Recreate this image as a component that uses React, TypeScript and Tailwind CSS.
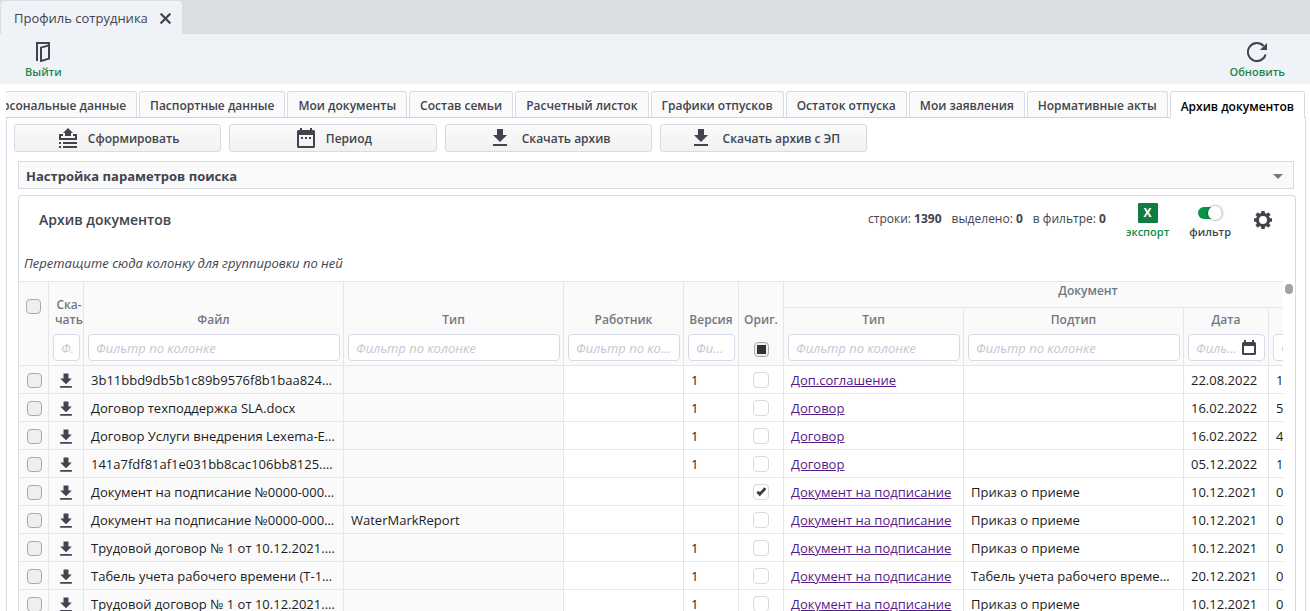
import { useState } from "react";
import type { ReactNode } from "react";

const tabs = [
  "Персональные данные",
  "Паспортные данные",
  "Мои документы",
  "Состав семьи",
  "Расчетный листок",
  "Графики отпусков",
  "Остаток отпуска",
  "Мои заявления",
  "Нормативные акты",
  "Архив документов",
];

type Row = {
  file: string;
  type: string;
  version: string;
  original: boolean;
  docType: string;
  subtype: string;
  date: string;
  number: string;
};

const sign = "Документ на подписание";
const order = "Приказ о приеме";

const rows: Row[] = [
  { file: "3b11bbd9db5b1c89b9576f8b1baa824…", type: "", version: "1", original: false, docType: "Доп.соглашение", subtype: "", date: "22.08.2022", number: "1" },
  { file: "Договор техподдержка SLA.docx", type: "", version: "1", original: false, docType: "Договор", subtype: "", date: "16.02.2022", number: "5" },
  { file: "Договор Услуги внедрения Lexema-E…", type: "", version: "1", original: false, docType: "Договор", subtype: "", date: "16.02.2022", number: "4" },
  { file: "141a7fdf81af1e031bb8cac106bb8125.…", type: "", version: "1", original: false, docType: "Договор", subtype: "", date: "05.12.2022", number: "1" },
  { file: "Документ на подписание №0000-000…", type: "", version: "", original: true, docType: sign, subtype: order, date: "10.12.2021", number: "0" },
  { file: "Документ на подписание №0000-000…", type: "WaterMarkReport", version: "", original: false, docType: sign, subtype: order, date: "10.12.2021", number: "0" },
  { file: "Трудовой договор № 1 от 10.12.2021.…", type: "", version: "1", original: false, docType: sign, subtype: order, date: "10.12.2021", number: "0" },
  { file: "Табель учета рабочего времени (Т-1…", type: "", version: "1", original: false, docType: sign, subtype: "Табель учета рабочего време…", date: "20.12.2021", number: "0" },
  { file: "Трудовой договор № 1 от 10.12.2021.…", type: "", version: "1", original: false, docType: sign, subtype: order, date: "10.12.2021", number: "0" },
];

function DownloadIcon({ className }: { className: string }) {
  return (
    <svg viewBox="0 0 24 24" fill="currentColor" className={className} aria-hidden="true">
      <path d="M19 9h-4V3H9v6H5l7 7 7-7zM5 18v2h14v-2H5z" />
    </svg>
  );
}

function ExitIcon() {
  return (
    <svg width="20" height="20" viewBox="0 0 20 20" fill="none" stroke="currentColor" strokeWidth="2" aria-hidden="true">
      <path d="M4 19V1h12v3" />
      <path d="M8 5.6L16 3.4V16.6L8 19z" />
    </svg>
  );
}

function RefreshIcon() {
  return (
    <svg width="20" height="20" viewBox="0 0 20 20" aria-hidden="true">
      <path d="M18.6 12.4A9 9 0 1 1 16.6 4" fill="none" stroke="currentColor" strokeWidth="2" />
      <path d="M20 1v7h-7z" fill="currentColor" />
    </svg>
  );
}

function GenerateIcon() {
  return (
    <svg width="20" height="20" viewBox="0 0 20 20" fill="currentColor" aria-hidden="true">
      <path d="M10 0l5 5h-2v3H7V5H5z" />
      <path d="M1 6h4v2H3v2h14V8h-2V6h4v6H1z" />
      <path d="M1 14h2v2H1zM5 14h14v2H5zM1 18h2v2H1zM5 18h14v2H5z" />
    </svg>
  );
}

function PeriodIcon() {
  return (
    <svg width="20" height="20" viewBox="0 0 20 20" fill="currentColor" aria-hidden="true">
      <path fillRule="evenodd" d="M4 0h2v2h8V0h2v2h1.500a1.500 1.500 0 0 1 1.500 1.500v15a1.500 1.500 0 0 1-1.500 1.500h-15A1.500 1.500 0 0 1 1 18.500v-15A1.500 1.500 0 0 1 2.500 2H4zM3 7v11h14V7z" />
      <path d="M5 9h2v2H5zM9 9h2v2H9zM13 9h2v2h-2z" />
    </svg>
  );
}

function DateIcon() {
  return (
    <svg width="14" height="16" viewBox="0 0 14 16" fill="currentColor" aria-hidden="true" className="shrink-0">
      <path fillRule="evenodd" d="M2 0h2v2h6V0h2v2h.5A1.500 1.500 0 0 1 14 3.500v10a1.500 1.500 0 0 1-1.500 1.500h-11A1.500 1.500 0 0 1 0 13.500v-10A1.500 1.500 0 0 1 1.500 2H2zM2 6v7h10V6z" />
    </svg>
  );
}

function GearIcon() {
  return (
    <svg width="18" height="18" viewBox="0 0 18 18" fill="none" stroke="currentColor" aria-hidden="true">
      <circle cx="9" cy="9" r="5.600" strokeWidth="3.200" />
      <path strokeWidth="3.600" d="M9 0v3M9 15v3M0 9h3M15 9h3" />
      <path strokeWidth="3.600" d="M2.600 2.600l2 2M13.400 13.400l2 2M15.400 2.600l-2 2M4.600 13.400l-2 2" />
    </svg>
  );
}

function ActionButton({ icon, children }: { icon: ReactNode; children: ReactNode }) {
  return (
    <button
      type="button"
      className="flex h-7 items-center justify-center gap-2.5 rounded-[3px] border border-[#d9dae8] bg-linear-to-b from-[#fafafa] to-[#f1f1f1] pl-0.5 text-[12px] font-semibold"
    >
      {icon}
      <span className="pt-0.5">{children}</span>
    </button>
  );
}

function SelectBox({ label, mixed = false }: { label: string; mixed?: boolean }) {
  return (
    <label className="inline-grid place-items-center align-middle *:[grid-area:1/1]">
      <input
        type="checkbox"
        aria-label={label}
        className="size-[15px] appearance-none rounded-[4px] border border-[#a9a9a9] bg-[#efefef]"
      />
      {mixed && <span className="size-[9px] bg-[#333333]" />}
    </label>
  );
}

function OriginalBox({ checked }: { checked: boolean }) {
  return (
    <label className="inline-grid place-items-center align-middle *:[grid-area:1/1]">
      <input
        type="checkbox"
        aria-label="Оригинал"
        defaultChecked={checked}
        className="peer size-4 appearance-none rounded-[4px] border border-[#d5dae0] bg-white"
      />
      <svg width="10" height="10" viewBox="0 0 10 10" fill="none" stroke="#3a3a3a" strokeWidth="2.8" aria-hidden="true" className="invisible peer-checked:visible">
        <path d="M1.400 4.800l2.400 2.400L9.400 1.200" />
      </svg>
    </label>
  );
}

function Filter({ label, withDate = false, narrow = false }: { label: string; withDate?: boolean; narrow?: boolean }) {
  return (
    <span
      className={
        narrow
          ? "mr-[3px] ml-1 flex h-[27px] items-center rounded-[4px] border border-[#d9dae8] bg-white pr-1.5 pl-[7px]"
          : "mr-[3px] ml-1 flex h-[27px] items-center rounded-[4px] border border-[#d9dae8] bg-white pr-2 pl-[7px]"
      }
    >
      <input
        type="text"
        aria-label={label}
        placeholder={narrow ? "Ф." : "Фильтр по колонке"}
        className="w-full min-w-0 pt-0.5 text-[13px] font-normal text-ellipsis italic outline-none placeholder:text-[#c3c7d3]"
      />
      {withDate && (
        <button type="button" aria-label="Выбрать дату" className="ml-1 text-[#41444f]">
          <DateIcon />
        </button>
      )}
    </span>
  );
}

const headCell = "border-r border-b border-[#e6e6ea] bg-[#fafafa] p-0 pb-1 align-bottom font-semibold";
const bodyCell = "h-7 overflow-hidden border-r border-b border-[#e6e6ea] p-0 pt-0.5 pl-[7px] whitespace-nowrap";

function HeadLabel({ children }: { children: ReactNode }) {
  return <span className="mb-[7px] block text-center leading-[15px]">{children}</span>;
}

export default function App() {
  const [active, setActive] = useState(tabs.length - 1);

  return (
    <div className="flex h-screen flex-col overflow-hidden bg-white font-['Open_Sans',sans-serif] text-[13px] text-[#41444f]">
      <header className="shrink-0">
        <div className="flex h-[34px] items-end bg-[#dadde1] pl-px">
          <div className="flex h-[33px] items-center gap-3 rounded-t-[4px] bg-[#eff3f8] pr-[11px] pl-[13px]">
            <span className="pt-0.5">Профиль сотрудника</span>
            <button type="button" aria-label="Закрыть" className="pt-0.5">
              <svg width="11" height="11" viewBox="0 0 11 11" stroke="currentColor" strokeWidth="2.200" aria-hidden="true">
                <path d="M.6.6l9.800 9.800M10.400.6L.6 10.400" />
              </svg>
            </button>
          </div>
        </div>
        <div className="flex h-[50px] items-start justify-between bg-[#eff3f8] px-[25px] pt-2">
          <button type="button" className="flex flex-col items-center gap-0.5 text-[11px] font-semibold">
            <ExitIcon />
            <span className="leading-4 text-[#23854b]">Выйти</span>
          </button>
          <button type="button" className="flex flex-col items-center gap-0.5 text-[11px] font-semibold">
            <RefreshIcon />
            <span className="leading-4 text-[#23854b]">Обновить</span>
          </button>
        </div>
      </header>

      <main className="mt-[7px] mr-1 ml-1.5 flex min-h-0 flex-1 flex-col">
        <nav className="flex h-[27px] shrink-0 items-start justify-end gap-0.5 overflow-hidden pr-px shadow-[inset_0_-1px_0_#ccd2e0]">
          {tabs.map((tab, i) => (
            <button
              key={tab}
              type="button"
              onClick={() => setActive(i)}
              className={
                i === active
                  ? "h-[27px] shrink-0 rounded-t-[3px] border border-b-0 border-[#d9dae8] bg-white px-2.5 pt-1 text-[12px] font-semibold whitespace-nowrap text-black"
                  : "h-[26px] shrink-0 rounded-t-[3px] border border-b-0 border-[#d9dae8] bg-[#fafafa] px-2.5 pt-[3px] text-[12px] font-semibold whitespace-nowrap"
              }
            >
              {tab}
            </button>
          ))}
        </nav>

        <div className="flex min-h-0 flex-1 flex-col border-x border-[#d9dae8] pt-1.5">
          <div className="ml-[7px] grid w-[853px] shrink-0 grid-cols-4 gap-2">
            <ActionButton icon={<GenerateIcon />}>Сформировать</ActionButton>
            <ActionButton icon={<PeriodIcon />}>Период</ActionButton>
            <ActionButton icon={<DownloadIcon className="size-6" />}>Скачать архив</ActionButton>
            <ActionButton icon={<DownloadIcon className="size-6" />}>Скачать архив с ЭП</ActionButton>
          </div>

          <button
            type="button"
            className="mt-[9px] mr-[11px] ml-[11px] flex h-7 shrink-0 items-center justify-between border border-[#d9dae8] bg-[#fafafa] pt-[3px] pr-2.5 pl-[7px] text-[13px] font-bold"
          >
            Настройка параметров поиска
            <svg width="10" height="5" viewBox="0 0 10 5" fill="#757779" aria-hidden="true">
              <path d="M0 0h10L5 5z" />
            </svg>
          </button>

          <section className="mt-1.5 mr-[9px] ml-[11px] flex min-h-0 flex-1 flex-col overflow-hidden rounded-t-[4px] border border-b-0 border-[#d9dae8]">
            <div className="flex h-12 shrink-0 items-center justify-between pr-[23px] pl-5">
              <h1 className="pb-0.5 text-[14px] font-semibold">Архив документов</h1>
              <div className="flex items-center">
                <p className="mr-5 flex gap-2.5 pb-0.5 text-[12px]">
                  <span>строки: <b>1390</b></span>
                  <span>выделено: <b>0</b></span>
                  <span>в фильтре: <b>0</b></span>
                </p>
                <button type="button" className="mr-5 flex flex-col items-center gap-px pt-0.5 text-[11px] font-semibold text-[#0f8f45]">
                  <span className="flex size-5 items-center justify-center rounded-[1px] bg-[#107c41] text-[12px] font-bold text-white">X</span>
                  <span className="leading-4">экспорт</span>
                </button>
                <label className="mr-[23px] flex flex-col items-center gap-px pt-0.5 text-[11px] font-semibold">
                  <span className="flex h-5 w-6 items-center">
                    <input
                      type="checkbox"
                      defaultChecked
                      className="h-3 w-6 appearance-none rounded-full bg-[#b5b8c0] before:block before:size-3.5 before:-translate-y-px before:rounded-full before:bg-white before:shadow-[0_0_3px_rgba(0,0,0,0.5)] checked:bg-[#0c9248] checked:before:translate-x-2.5"
                    />
                  </span>
                  <span className="leading-4">фильтр</span>
                </label>
                <button type="button" aria-label="Настройки таблицы">
                  <GearIcon />
                </button>
              </div>
            </div>
            <p className="h-[37px] shrink-0 pt-2.5 pl-[5px] text-[13px] italic">
              Перетащите сюда колонку для группировки по ней
            </p>

            <div className="flex min-h-0 flex-1">
              <div className="min-w-0 flex-1 overflow-hidden">
                <table className="w-[1430px] table-fixed border-separate border-spacing-0 border-t border-[#e6e6ea]">
                  <colgroup>
                    <col className="w-[30px]" />
                    <col className="w-[35px]" />
                    <col className="w-[260px]" />
                    <col className="w-[220px]" />
                    <col className="w-[120px]" />
                    <col className="w-[55px]" />
                    <col className="w-[45px]" />
                    <col className="w-[180px]" />
                    <col className="w-[220px]" />
                    <col className="w-[85px]" />
                    <col className="w-[180px]" />
                  </colgroup>
                  <thead className="text-[12px] text-[#73777f]">
                    <tr className="h-[26px]">
                      <th rowSpan={2} className="border-r border-b border-[#e6e6ea] bg-[#fafafa] p-0 pt-[15px] align-top">
                        <SelectBox label="Выбрать все" />
                      </th>
                      <th rowSpan={2} className={headCell}>
                        <span className="mb-[7px] block pl-1.5 text-center leading-[15px]">Ска-<br />чать</span>
                        <Filter label="Скачать" narrow />
                      </th>
                      <th rowSpan={2} className={headCell}><HeadLabel>Файл</HeadLabel><Filter label="Файл" /></th>
                      <th rowSpan={2} className={headCell}><HeadLabel>Тип</HeadLabel><Filter label="Тип" /></th>
                      <th rowSpan={2} className={headCell}><HeadLabel>Работник</HeadLabel><Filter label="Работник" /></th>
                      <th rowSpan={2} className={headCell}><HeadLabel>Версия</HeadLabel><Filter label="Версия" /></th>
                      <th rowSpan={2} className={headCell}>
                        <HeadLabel>Ориг.</HeadLabel>
                        <span className="flex h-[27px] items-center justify-center pt-1">
                          <SelectBox label="Фильтр по оригиналу" mixed />
                        </span>
                      </th>
                      <th colSpan={4} className="border-b border-[#e6e6ea] bg-[#fafafa] p-0 text-left font-semibold">
                        <span className="block w-[608px] pb-2 text-center leading-[15px]">Документ</span>
                      </th>
                    </tr>
                    <tr className="h-[58px]">
                      <th className={headCell}><HeadLabel>Тип</HeadLabel><Filter label="Тип документа" /></th>
                      <th className={headCell}><HeadLabel>Подтип</HeadLabel><Filter label="Подтип" /></th>
                      <th className={headCell}><HeadLabel>Дата</HeadLabel><Filter label="Дата" withDate /></th>
                      <th className={headCell}><Filter label="Номер" /></th>
                    </tr>
                  </thead>
                  <tbody className="text-[13px] text-[#1c1c1e]">
                    {rows.map((row, i) => (
                      <tr key={i}>
                        <td className="h-7 border-r border-b border-[#e6e6ea] bg-[#fafafa] p-0 pt-0.5 pl-0.5 text-center leading-none">
                          <SelectBox label="Выбрать строку" />
                        </td>
                        <td className="h-7 border-r border-b border-[#e6e6ea] bg-[#fafafa] p-0 pt-0.5 text-center leading-none">
                          <button type="button" aria-label="Скачать" className="align-middle text-[#41444f]">
                            <DownloadIcon className="size-5" />
                          </button>
                        </td>
                        <td className={bodyCell + " bg-[#fafafa]"}>{row.file}</td>
                        <td className={bodyCell + " bg-[#fafafa]"}>{row.type}</td>
                        <td className={bodyCell}></td>
                        <td className={bodyCell}>{row.version}</td>
                        <td className="h-7 border-r border-b border-[#e6e6ea] p-0 text-center leading-none">
                          <OriginalBox checked={row.original} />
                        </td>
                        <td className={bodyCell}>
                          <a href="#document" className="text-[#551a8b] underline">{row.docType}</a>
                        </td>
                        <td className={bodyCell}>{row.subtype}</td>
                        <td className={bodyCell}>{row.date}</td>
                        <td className={bodyCell}>{row.number}</td>
                      </tr>
                    ))}
                  </tbody>
                </table>
              </div>
              <div className="w-3 shrink-0 pt-[3px] pl-0.5">
                <div className="h-2.5 w-2 rounded-full bg-[#9fa1ab]" />
              </div>
            </div>
          </section>
        </div>
      </main>
    </div>
  );
}
